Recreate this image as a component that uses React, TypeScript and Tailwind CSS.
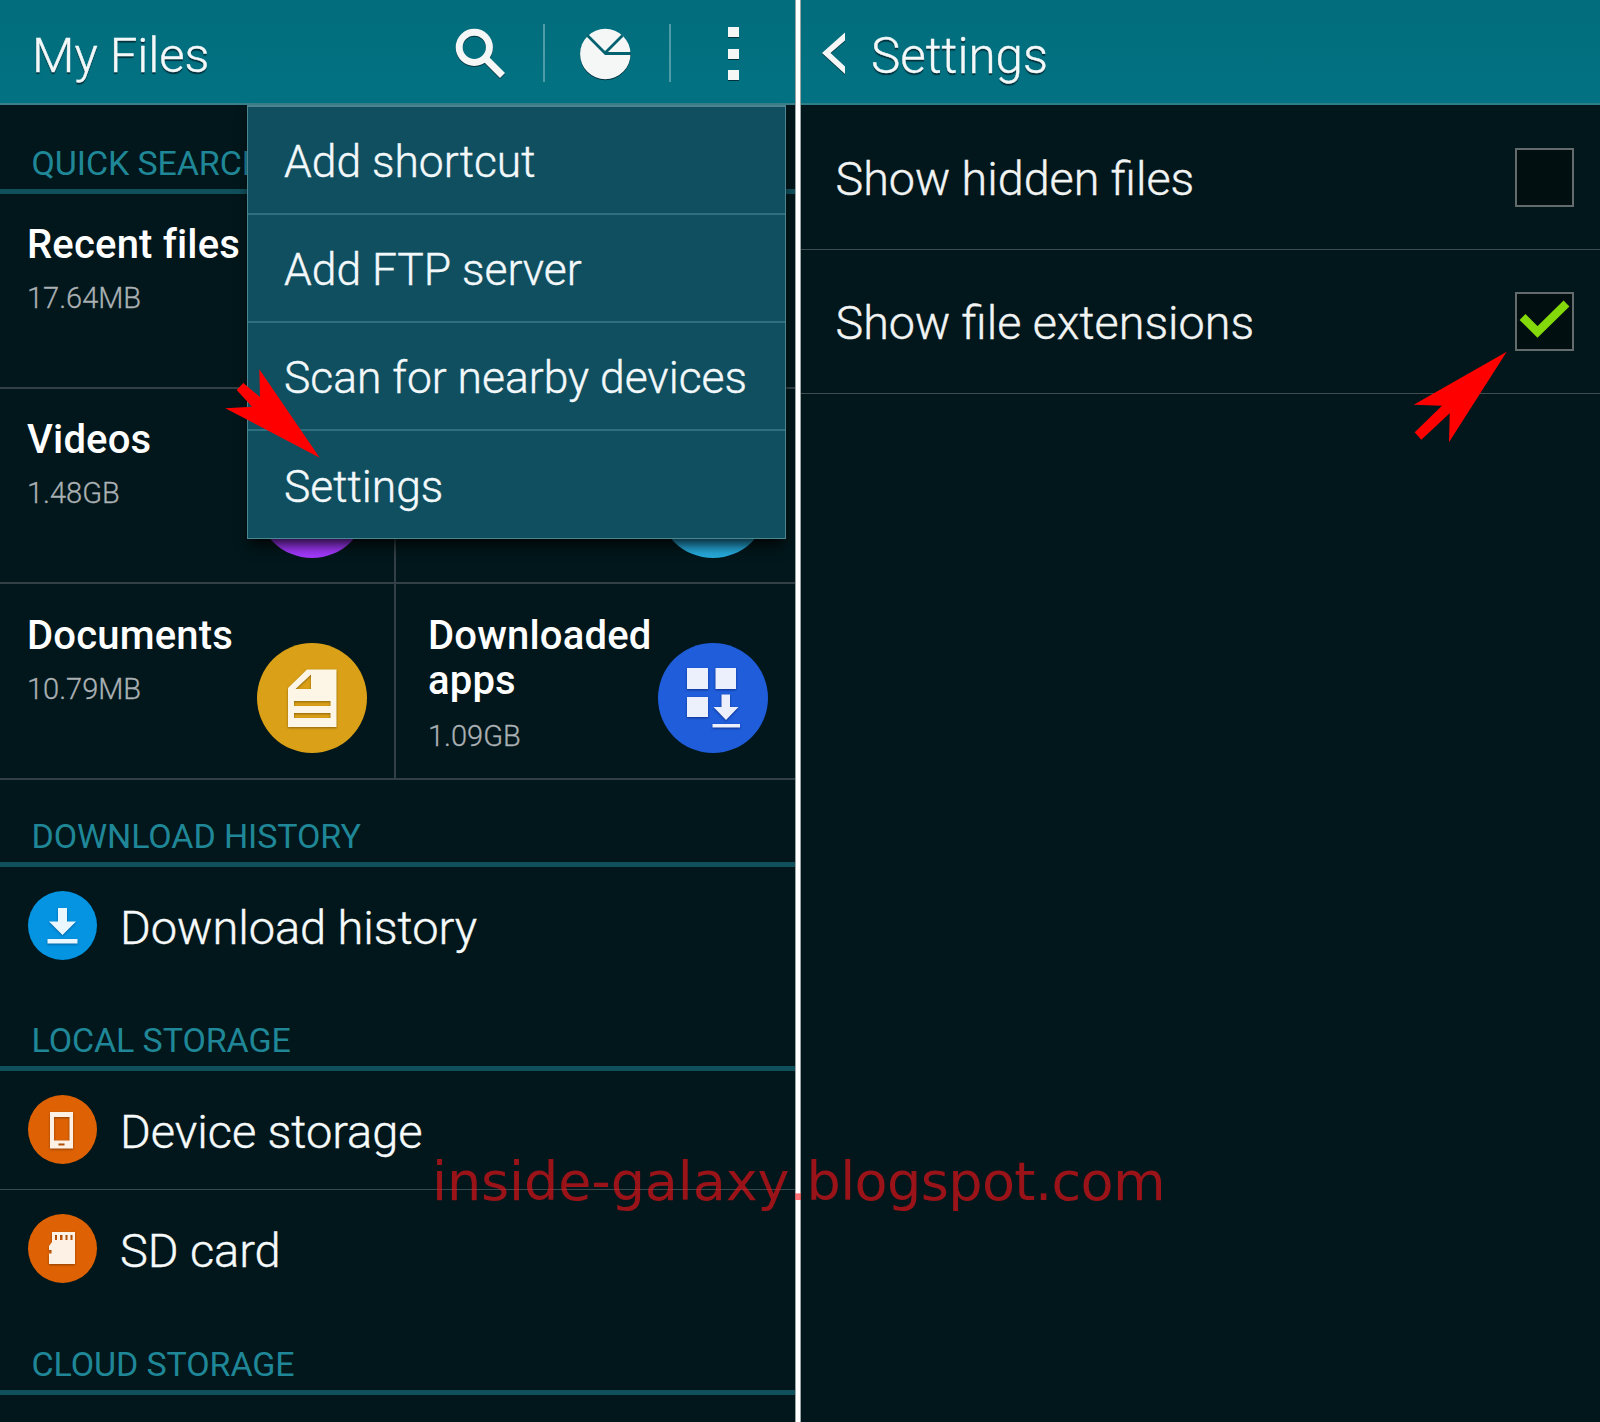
import type { ReactNode } from 'react';

const ROBOTO = "font-['Roboto',sans-serif]";
const INK_SHADOW = 'drop-shadow-[0_1px_0_rgba(0,30,40,0.75)]';

function SearchIcon() {
  return (
    <svg width="54" height="54" viewBox="0 0 54 54" className={INK_SHADOW}>
      <circle cx="22.3" cy="20.3" r="15.1" fill="none" stroke="#f5f7f7" strokeWidth="7" />
      <path d="M33 31 50.5 48.5" stroke="#f5f7f7" strokeWidth="7" />
    </svg>
  );
}

function PieIcon() {
  return (
    <svg width="54" height="54" viewBox="0 0 54 54" className={INK_SHADOW}>
      <circle cx="27.3" cy="27" r="25.2" fill="#f5f7f7" />
      <path d="M9.5 8.5 27 26 44.5 8.5M27 26.5H53" fill="none" stroke="#04616f" strokeWidth="2.8" />
    </svg>
  );
}

function Separator() {
  return <div className="h-[58px] w-[2px] bg-[#4f9ba7]" />;
}

function Dot() {
  return <div className="h-[10px] w-[11px] bg-[#f5f7f7] shadow-[0_1px_0_rgba(0,30,40,0.75)]" />;
}

function SectionTitle({ children, className }: { children: ReactNode; className: string }) {
  return (
    <div
      className={`flex shrink-0 items-end border-b-[5px] border-[#10505b] pl-[31.500px] text-[34px] leading-[40px] tracking-[-0.1px] text-[#1f8797] ${className}`}
    >
      <span className="mb-[6px] whitespace-nowrap">{children}</span>
    </div>
  );
}

function Tile({
  title,
  size,
  icon,
  circle,
  right,
  className = 'pt-[29px]',
}: {
  title: string;
  size: string;
  icon?: ReactNode;
  circle?: string;
  right?: boolean;
  className?: string;
}) {
  return (
    <div
      className={`relative border-b-2 border-[#323f44] ${className} ${
        right ? 'pl-[32px]' : 'border-r-2 pl-[27px]'
      }`}
    >
      <div className="w-[250px] text-[40px] leading-[45px] font-medium tracking-[0.18px] text-white">{title}</div>
      <div
        className={`text-[29px] leading-[36px] font-light text-[#aab0b3] [-webkit-text-stroke:0.3px_#aab0b3] ${
          right ? 'mt-[15px]' : 'mt-[13px]'
        }`}
      >
        {size}
      </div>
      {circle && (
        <div
          className={`absolute top-[58.500px] flex h-[110px] w-[110px] items-center justify-center rounded-full ${circle} ${
            right ? 'left-[262px]' : 'left-[257px]'
          }`}
        >
          {icon}
        </div>
      )}
    </div>
  );
}

function DocumentIcon() {
  return (
    <svg width="110" height="110" viewBox="0 0 110 110" className="drop-shadow-[0_1px_1px_rgba(90,60,0,0.6)]">
      <path
        fillRule="evenodd"
        fill="#fdf6e6"
        d="M50 26.500H79.500V84H31V45ZM54 31.500 38.500 46H54ZM37 58V63H73.500V58ZM37 70V75H73.500V70Z"
      />
    </svg>
  );
}

function AppsIcon() {
  return (
    <svg width="110" height="110" viewBox="0 0 110 110" className="drop-shadow-[0_1px_1px_rgba(0,20,90,0.6)]">
      <path
        fill="#ebf0fc"
        d="M29 25H50V46H29ZM57.500 25H78V46H57.500ZM29 54H50V74H29ZM63.500 51.500H72V64H80.500L68 77 55.500 64H63.500ZM54.500 81H82V84.500H54.500Z"
      />
    </svg>
  );
}

function DownloadIcon() {
  return (
    <svg width="69" height="69" viewBox="0 0 69 69" className="drop-shadow-[0_1px_1px_rgba(0,40,90,0.5)]">
      <path fill="#eaf7fe" d="M30 17H39V30.500H48L34.500 44 21 30.500H30ZM19.500 48H49.500V52.500H19.500Z" />
    </svg>
  );
}

function PhoneIcon() {
  return (
    <svg width="69" height="69" viewBox="0 0 69 69" className="drop-shadow-[0_1px_1px_rgba(90,40,0,0.6)]">
      <path
        fillRule="evenodd"
        fill="#fdf1e6"
        d="M22 17H45V53.500H22ZM26 22V45.500H41.500V22ZM30.500 48.500V50.500H36.500V48.500Z"
      />
    </svg>
  );
}

function SdCardIcon() {
  return (
    <svg width="69" height="69" viewBox="0 0 69 69" className="drop-shadow-[0_1px_1px_rgba(90,40,0,0.6)]">
      <path
        fillRule="evenodd"
        fill="#fdf1e6"
        d="M24 18H47V50H21V39.500H23.500V36H21V32L24 28ZM27 21V26H29V21ZM32 21V26H34.500V21ZM37.500 21V26H39.500V21ZM42.500 21V26H44.500V21Z"
      />
    </svg>
  );
}

function StorageRow({
  icon,
  circle,
  label,
  divider,
}: {
  icon: ReactNode;
  circle: string;
  label: string;
  divider?: boolean;
}) {
  return (
    <div className={`flex h-[119px] shrink-0 items-start pl-[28px] ${divider ? 'border-b border-[#3a494d]' : ''}`}>
      <div className={`mt-[23.500px] h-[69px] w-[69px] shrink-0 rounded-full ${circle}`}>{icon}</div>
      <span className="mt-[32.500px] ml-[23px] text-[47px] leading-[56px] font-light tracking-[-0.06px] whitespace-nowrap text-[#f7fafa] [-webkit-text-stroke:0.4px_#f7fafa]">
        {label}
      </span>
    </div>
  );
}

const MENU = ['Add shortcut', 'Add FTP server', 'Scan for nearby devices', 'Settings'];

function Menu() {
  return (
    <div className="absolute top-[105px] left-[247px] flex h-[434px] w-[539px] flex-col border border-t-2 border-[#4c8490] bg-[#0f4f60] shadow-[0_9px_12px_-3px_rgba(0,0,0,0.8)]">
      {MENU.map((item) => (
        <div
          key={item}
          className="flex h-[108px] shrink-0 items-center border-b-2 border-[#2f7080] pl-[36px] text-[44.400px] leading-[52px] font-light whitespace-nowrap text-[#f3f8fa] [-webkit-text-stroke:0.4px_#f3f8fa] last:border-b-0"
        >
          <span className="mt-[3px]">{item}</span>
        </div>
      ))}
    </div>
  );
}

function MyFiles() {
  return (
    <section className="relative flex w-[795px] shrink-0 flex-col overflow-hidden bg-[#02171b]">
      <header className="flex h-[105px] shrink-0 items-start border-b-2 border-[#3c7f89] bg-linear-to-b from-[#026d7c] to-[#027282]">
        <h1 className="mt-[27px] ml-[32px] w-[420px] text-[49px] leading-[58px] font-light text-[#f3f8f9] [-webkit-text-stroke:0.4px_#f3f8f9] [text-shadow:0_2px_1px_rgba(0,30,40,0.8)]">
          My Files
        </h1>
        <div className="mt-[27px] w-[91px]">
          <SearchIcon />
        </div>
        <div className="mt-[24px] w-[35px]">
          <Separator />
        </div>
        <div className="mt-[27px] w-[91px]">
          <PieIcon />
        </div>
        <div className="mt-[24px] w-[59px]">
          <Separator />
        </div>
        <div className="mt-[27px] flex flex-col gap-[11.500px]">
          <Dot />
          <Dot />
          <Dot />
        </div>
      </header>
      <SectionTitle className="h-[89px]">QUICK SEARCHES</SectionTitle>
      <div className="grid shrink-0 grid-cols-[396px_399px] grid-rows-[195px_195px_196px]">
        <Tile title="Recent files" size="17.64MB" className="pt-[28px]" />
        <Tile title="" size="" right />
        <Tile title="Videos" size="1.48GB" circle="bg-[#a238fb]" className="pt-[28px]" />
        <Tile title="" size="" right circle="bg-[#26a9da]" />
        <Tile title="Documents" size="10.79MB" circle="bg-[#daa017]" icon={<DocumentIcon />} />
        <Tile title="Downloaded apps" size="1.09GB" right circle="bg-[#1f5dda]" icon={<AppsIcon />} />
      </div>
      <SectionTitle className="h-[87px]">DOWNLOAD HISTORY</SectionTitle>
      <StorageRow icon={<DownloadIcon />} circle="bg-[#0494e2]" label="Download history" />
      <SectionTitle className="h-[85px]">LOCAL STORAGE</SectionTitle>
      <StorageRow icon={<PhoneIcon />} circle="bg-[#de6204]" label="Device storage" divider />
      <StorageRow icon={<SdCardIcon />} circle="bg-[#de6204]" label="SD card" />
      <SectionTitle className="h-[86px]">CLOUD STORAGE</SectionTitle>
      <Menu />
    </section>
  );
}

function Option({ label, checked, className }: { label: string; checked?: boolean; className: string }) {
  return (
    <div className={`flex items-start justify-between border-b border-[#3f4c50] pr-[26px] pl-[34.500px] ${className}`}>
      <span className="mt-[3px] text-[46.700px] leading-[56px] font-light whitespace-nowrap text-[#f2f4f4] [-webkit-text-stroke:0.4px_#f2f4f4]">
        {label}
      </span>
      <div className="h-[59px] w-[59px] border-2 border-[#646b6d] bg-[#010f10]">
        {checked && (
          <svg width="55" height="55" viewBox="0 0 55 55">
            <path d="M5.500 23 20.500 38 49.500 9.500" fill="none" stroke="#83d90a" strokeWidth="8.300" />
          </svg>
        )}
      </div>
    </div>
  );
}

function SettingsPanel() {
  return (
    <section className="flex grow flex-col bg-[#02171b]">
      <header className="flex h-[105px] shrink-0 items-start border-b-2 border-[#2f7f8b] bg-linear-to-b from-[#026d7c] to-[#027282]">
        <svg width="26" height="44" viewBox="0 0 26 44" className={`mt-[31px] ml-[19.500px] ${INK_SHADOW}`}>
          <path d="M24 1.500V9.500L9.500 22 24 35.500V43L1 22Z" fill="#f5f7f7" />
        </svg>
        <h1 className="mt-[27px] ml-[24.500px] text-[49.300px] leading-[58px] font-light text-[#f3f8f9] [-webkit-text-stroke:0.4px_#f3f8f9] [text-shadow:0_2px_1px_rgba(0,30,40,0.8)]">
          Settings
        </h1>
      </header>
      <Option label="Show hidden files" className="h-[145px] pt-[43px]" />
      <Option label="Show file extensions" checked className="h-[144px] pt-[42px]" />
    </section>
  );
}

export default function App() {
  return (
    <div className={`relative flex h-[1422px] w-[1600px] overflow-hidden bg-[#02171b] ${ROBOTO}`}>
      <MyFiles />
      <div className="w-[6px] shrink-0 border-r border-l border-[#9ba5a6] bg-white" />
      <SettingsPanel />
      <svg className="absolute top-[369px] left-[225px]" width="96" height="90" viewBox="0 0 96 90">
        <path d="M94.700 88.700 0.300 39.300 27 37.700 11.700 21 18.300 14 35 28 34.300 0.300Z" fill="#ff0000" />
      </svg>
      <svg className="absolute top-[351px] left-[1413px]" width="95" height="92" viewBox="0 0 95 92">
        <path d="M93.700 0.700 0.700 53.700 29 54.700 1.700 81.300 8.300 88.700 36.700 62.300 36 91.300Z" fill="#ff0000" />
      </svg>
      <div className="absolute top-[1150px] left-[432px] font-['DejaVu_Sans',sans-serif] text-[54px] leading-[64px] whitespace-nowrap text-[#ff1018]/60 [font-kerning:none]">
        <span className="tracking-[-0.1px]">inside-galaxy.</span>
        <span className="tracking-[-0.6px]">blogspot.com</span>
      </div>
    </div>
  );
}
